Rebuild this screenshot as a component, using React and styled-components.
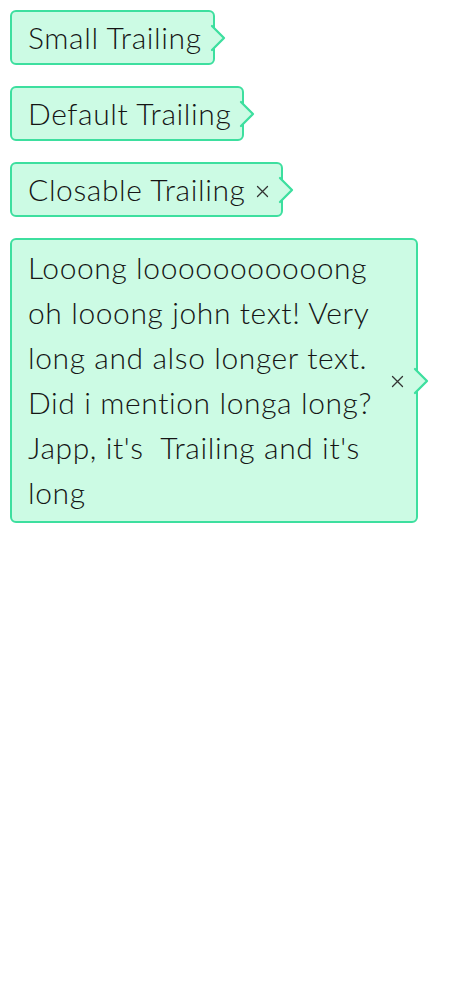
import styled, { createGlobalStyle } from 'styled-components'

const GlobalStyle = createGlobalStyle`
  body {
    margin: 0;
    background: #ffffff;
    font-family: Lato, "Noto Sans", sans-serif;
  }
`

const MINT = '#ccfbe4'
const GREEN = '#3ddf9f'

const List = styled.div`
  display: flex;
  flex-direction: column;
  align-items: flex-start;
  gap: 21px;
  padding: 10px;
`

const Chip = styled.div`
  position: relative;
  display: inline-flex;
  align-items: center;
  gap: 10px;
  max-width: 408px;
  box-sizing: border-box;
  padding: ${props => props.$multiline ? '5px 12px 6px 16px' : '3px 11px 3px 16px'};
  background: ${MINT};
  border: 2px solid ${GREEN};
  border-radius: 6px;
  color: #151515;
  font-size: 30px;
  font-weight: 300;
  letter-spacing: 0.6px;
  line-height: 45px;
`

const Label = styled.span`
  white-space: pre-wrap;
`

const Close = styled.button`
  flex: none;
  display: flex;
  align-items: center;
  justify-content: center;
  width: 14px;
  height: 14px;
  padding: 0;
  margin-top: 3px;
  border: none;
  background: transparent;
  color: #333;
  cursor: pointer;
`

const Arrow = styled.svg`
  position: absolute;
  top: 50%;
  right: -14px;
  width: 16px;
  height: 26px;
  transform: translateY(-50%);
  overflow: visible;
`

const Tail = () => (
  <Arrow viewBox="0 0 16 26">
    <path d="M0,1 L1,1 L13,13 L1,25 L0,25 Z" fill={MINT} />
    <path d="M1,1 L13,13 L1,25" fill="none" stroke={GREEN} strokeWidth="2.3" strokeLinejoin="round" strokeLinecap="round" />
  </Arrow>
)

const CloseIcon = () => (
  <svg width="13" height="13" viewBox="0 0 13 13">
    <path d="M1.5,1.5 L11.5,11.5 M11.5,1.5 L1.5,11.5" stroke="currentColor" strokeWidth="1.3" strokeLinecap="round" />
  </svg>
)

const Tag = ({ children, closable, multiline }) => (
  <Chip $multiline={multiline}>
    <Label>{children}</Label>
    {closable && <Close aria-label="close"><CloseIcon /></Close>}
    <Tail />
  </Chip>
)

const App = () => {
  return (
    <>
      <GlobalStyle />
      <List>
        <Tag>Small Trailing</Tag>
        <Tag>Default Trailing</Tag>
        <Tag closable>Closable Trailing</Tag>
        <Tag closable multiline>
          Looong looooooooooong oh looong john text! Very long and also longer text. Did i mention longa long? Japp, it's  Trailing and it's long
        </Tag>
      </List>
    </>
  )
}

export default App
